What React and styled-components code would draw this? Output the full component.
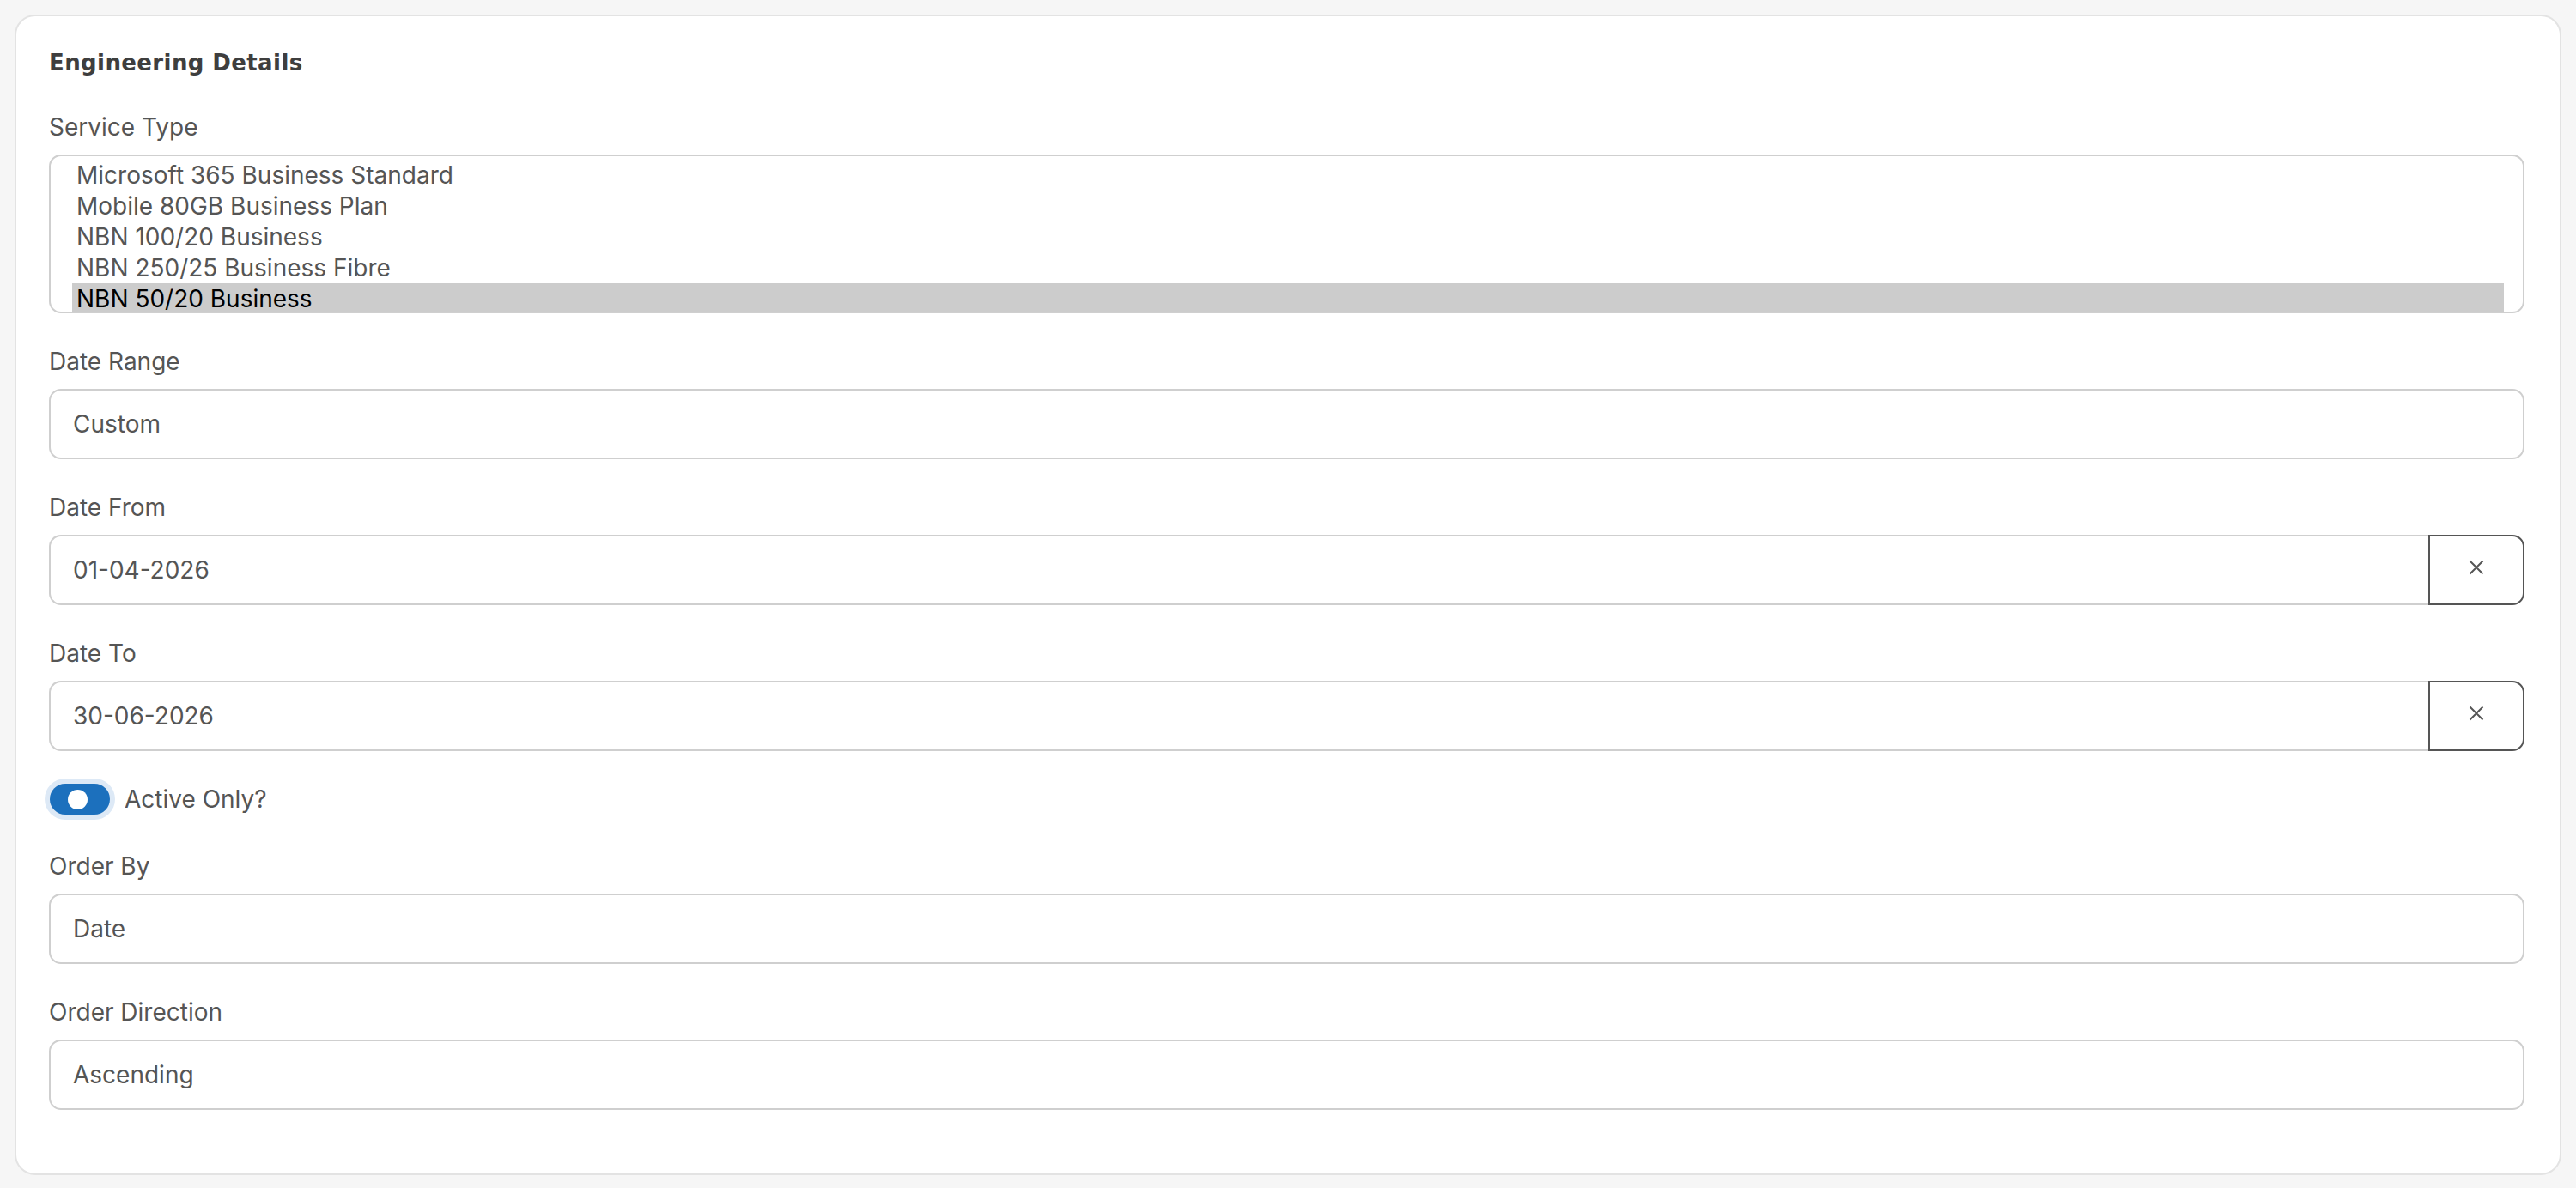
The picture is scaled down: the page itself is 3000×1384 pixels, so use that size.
import React from "react";
import styled, { createGlobalStyle } from "styled-components";

const GlobalStyle = createGlobalStyle`
  html, body {
    margin: 0;
    padding: 0;
    background: #f6f6f6;
  }
  body {
    font-family: Inter, "Noto Sans", "Liberation Sans", sans-serif;
    -webkit-font-smoothing: antialiased;
  }
  * { box-sizing: border-box; }
`;

const Page = styled.div`
  padding: 17px 17px 18px 17px;
`;

const Card = styled.section`
  display: flex;
  flex-direction: column;
  gap: 38px;
  background: #ffffff;
  border: 2px solid #e3e3e3;
  border-radius: 24px;
  padding: 39px 41px 74px 38px;
`;

const Title = styled.h2`
  margin: 0 0 4px 0;
  font-family: "DejaVu Sans", Inter, sans-serif;
  font-size: 26px;
  line-height: 30px;
  font-weight: 700;
  color: #3e3e3e;
  letter-spacing: 0.4px;
`;

const Field = styled.div`
  display: flex;
  flex-direction: column;
`;

const Label = styled.label`
  display: block;
  font-size: 28px;
  line-height: 36px;
  color: #555555;
  margin-bottom: 14px;
`;

const ListBox = styled.div`
  height: 185px;
  border: 2px solid #cfcfcf;
  border-radius: 14px;
  padding: 4px 22px 0 25px;
  overflow: hidden;
  background: #fff;
`;

const Option = styled.div`
  height: 36px;
  line-height: 36px;
  padding: 0 5px;
  font-size: 28px;
  white-space: nowrap;
  color: ${(p) => (p.$selected ? "#000000" : "#555555")};
  background: ${(p) => (p.$selected ? "#cccccc" : "transparent")};
`;

const TextBox = styled.div`
  display: flex;
  align-items: center;
  flex: ${(p) => (p.$grouped ? "1 1 auto" : "none")};
  height: 82px;
  border: 2px solid #cfcfcf;
  border-radius: ${(p) => (p.$grouped ? "14px 0 0 14px" : "14px")};
  ${(p) => (p.$grouped ? "border-right: none;" : "")}
  padding: 0 26px;
  font-size: 28px;
  color: #555555;
  background: #fff;
`;

const InputGroup = styled.div`
  display: flex;
  align-items: stretch;
`;

const ClearButton = styled.button`
  display: flex;
  align-items: center;
  justify-content: center;
  flex: none;
  width: 112px;
  height: 82px;
  padding: 0 0 6px 0;
  border: 2px solid #555555;
  border-radius: 0 14px 14px 0;
  background: #ffffff;
  color: #555555;
  cursor: pointer;
`;

const ToggleRow = styled.div`
  display: flex;
  align-items: center;
  gap: 17px;
  height: 36px;
  margin-bottom: 4px;
`;

const Track = styled.span`
  position: relative;
  display: inline-block;
  width: 70px;
  height: 36px;
  margin-left: 1px;
  border-radius: 18px;
  background: #1c70bd;
  box-shadow: 0 0 0 6px #dde9f6;
`;

const Knob = styled.span`
  position: absolute;
  top: 6.5px;
  left: 21px;
  width: 23px;
  height: 23px;
  border-radius: 50%;
  background: #ffffff;
`;

const ToggleText = styled.span`
  font-size: 28px;
  line-height: 36px;
  color: #555555;
`;

const XIcon = () => (
  <svg width="18" height="18" viewBox="0 0 18 18" aria-hidden="true">
    <path d="M1.5 1.5 L16.5 16.5 M16.5 1.5 L1.5 16.5" stroke="#555" strokeWidth="2" fill="none" />
  </svg>
);

const services = [
  "Microsoft 365 Business Standard",
  "Mobile 80GB Business Plan",
  "NBN 100/20 Business",
  "NBN 250/25 Business Fibre",
  "NBN 50/20 Business",
];

const SimpleField = ({ label, value }) => (
  <Field>
    <Label>{label}</Label>
    <TextBox>{value}</TextBox>
  </Field>
);

const DateField = ({ label, value }) => (
  <Field>
    <Label>{label}</Label>
    <InputGroup>
      <TextBox $grouped>{value}</TextBox>
      <ClearButton aria-label="Clear">
        <XIcon />
      </ClearButton>
    </InputGroup>
  </Field>
);

export default function App() {
  return (
    <>
      <GlobalStyle />
      <Page>
        <Card>
          <Title>Engineering Details</Title>
          <Field>
            <Label>Service Type</Label>
            <ListBox role="listbox" aria-multiselectable="true">
              {services.map((s) => (
                <Option key={s} role="option" $selected={s === "NBN 50/20 Business"}>
                  {s}
                </Option>
              ))}
            </ListBox>
          </Field>
          <SimpleField label="Date Range" value="Custom" />
          <DateField label="Date From" value="01-04-2026" />
          <DateField label="Date To" value="30-06-2026" />
          <ToggleRow>
            <Track role="switch" aria-checked="true">
              <Knob />
            </Track>
            <ToggleText>Active Only?</ToggleText>
          </ToggleRow>
          <SimpleField label="Order By" value="Date" />
          <SimpleField label="Order Direction" value="Ascending" />
        </Card>
      </Page>
    </>
  );
}
